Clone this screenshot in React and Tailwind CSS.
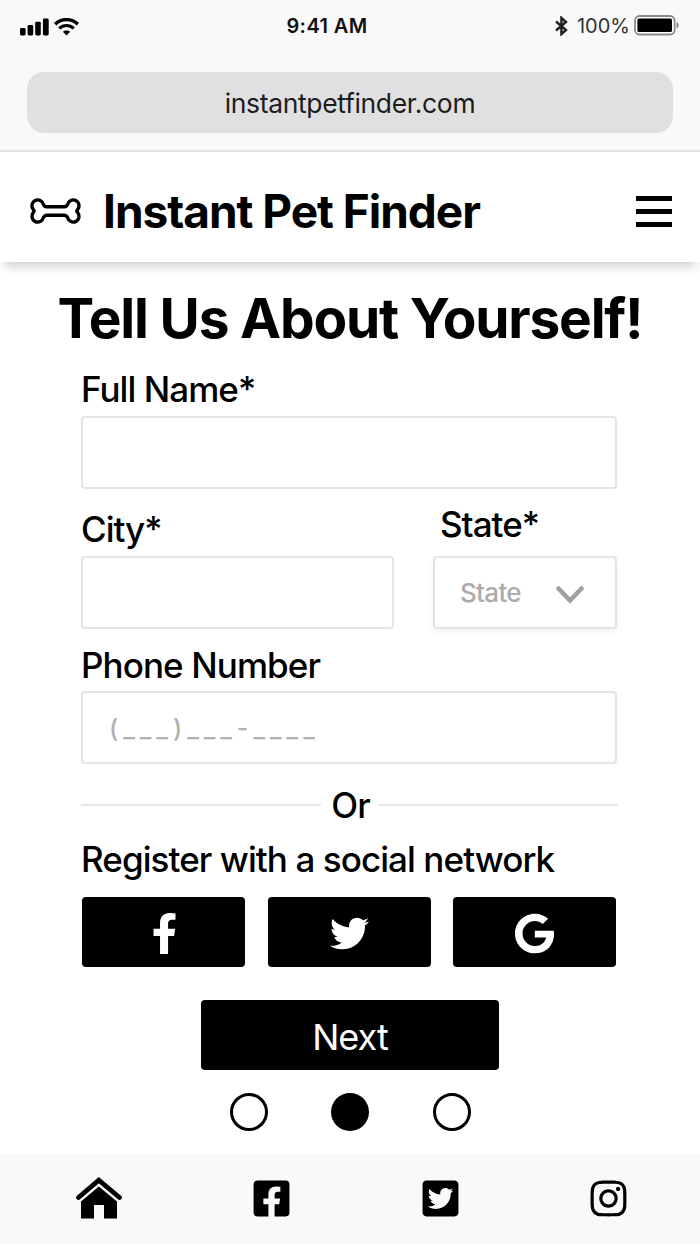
import { FaFacebookF, FaTwitter, FaGoogle, FaInstagram, FaFacebookSquare, FaTwitterSquare } from 'react-icons/fa';

function StatusBar() {
  return (
    <div className="grid h-[53px] grid-cols-3 items-center pr-[20px] pl-[20px] text-[20px] leading-[53px] text-[#111]">
      <div className="flex items-center gap-[5px]">
        <svg className="mt-px h-[18px] w-[29px]" viewBox="0 0 29 18" fill="black">
          <rect x="0" y="10" width="5.6" height="7.5" rx="1.4" />
          <rect x="7.6" y="7" width="5.6" height="10.5" rx="1.4" />
          <rect x="15.2" y="3.8" width="5.6" height="13.7" rx="1.4" />
          <rect x="22.9" y="0.5" width="5.8" height="17" rx="1.4" />
        </svg>
        <svg className="h-[18px] w-[25px]" viewBox="0 0 25 18" fill="none" stroke="black">
          <path d="M1.2 6.2C7.4 0.1 17.6 0.1 23.8 6.2" strokeWidth="3.4" />
          <path d="M5.2 10.4C9.2 6.5 15.8 6.5 19.8 10.4" strokeWidth="3" />
          <path d="M8.9 13.8C10.9 11.9 14.1 11.9 16.1 13.8L12.5 17.4Z" fill="black" stroke="none" />
        </svg>
      </div>
      <div className="pr-[46px] text-center font-semibold tracking-[0.4px] whitespace-nowrap">9:41 AM</div>
      <div className="flex items-center justify-end">
        <svg className="mr-[9px] mb-[2px] h-[20px] w-[13px]" viewBox="0 0 13 20" fill="none" stroke="#222" strokeWidth="2.4">
          <path d="M1 5.5L11 14L6.4 18.2V1.8L11 6L1 14.5" />
        </svg>
        <span className="mr-[4px] text-[#333]">100%</span>
        <svg className="mb-px h-[22px] w-[46px]" viewBox="0 0 46 22">
          <rect x="1" y="1" width="39.6" height="18.5" rx="4.5" fill="#fff" stroke="#8a8a8a" strokeWidth="1.8" />
          <rect x="3.4" y="3.5" width="34.6" height="13.4" rx="1.5" fill="#000" />
          <path d="M42.5 7C45.5 8.200 45.5 12.400 42.5 13.500Z" fill="#8a8a8a" />
        </svg>
      </div>
    </div>
  );
}

function BoneIcon() {
  return (
    <svg className="mt-[8px] h-[28px] w-[54px]" viewBox="0 0 54 28" fill="none" stroke="black" strokeWidth="3.400" strokeLinejoin="round">
      <path d="M17.500 9.800H35.500Q37.600 9.600 38.600 7.500A5.800 5.800 0 1 1 48.600 12.600Q47.200 14 48.600 15.400A5.800 5.800 0 1 1 38.600 20.500Q37.600 18.400 35.500 18.200H17.500Q15.400 18.400 14.400 20.500A5.800 5.800 0 1 1 4.400 15.400Q5.800 14 4.400 12.600A5.800 5.800 0 1 1 14.400 7.500Q15.400 9.600 17.500 9.800Z" />
    </svg>
  );
}

function HomeIcon() {
  return (
    <svg className="h-[42px] w-[46px]" viewBox="0 0 46 42">
      <path d="M2.500 20.500L22.800 3.200L43.500 20.500" fill="none" stroke="black" strokeWidth="4.800" strokeLinecap="round" />
      <path d="M5 24.500L22.800 9.500L41 24.500V41.500H28V28H18V41.500H5Z" fill="black" />
    </svg>
  );
}

const label = 'text-[35px] leading-[44px] font-medium whitespace-nowrap text-black';
const field = 'h-[73px] rounded-[4px] border-2 border-[#e4e4e4] bg-white';
const social = 'flex h-[70px] w-[163px] items-center justify-center rounded-[4px] bg-black pt-[2px]';

export default function App() {
  return (
    <div className="flex h-[1244px] w-[700px] flex-col overflow-hidden bg-white font-['Inter',sans-serif] text-black">
      <div className="h-[152px] shrink-0 border-b-2 border-[#e2e2e2] bg-[#f9f9f9]">
        <StatusBar />
        <div className="mx-[27px] mt-[19px] h-[61px] rounded-[17px] bg-[#e0e0e2] text-center text-[26.5px] leading-[63px] tracking-[-0.35px] text-[#1c1c1c]">
          instantpetfinder.com
        </div>
      </div>

      <header className="flex h-[110px] shrink-0 items-center pr-[28px] pl-[29px] shadow-[0_8px_10px_-4px_rgba(0,0,0,0.2)]">
        <BoneIcon />
        <h1 className="ml-[20px] grow pt-[8px] text-[46px] leading-[54px] font-bold tracking-[-1.02px] whitespace-nowrap">Instant Pet Finder</h1>
        <div className="mt-[9px] flex w-[36px] flex-col gap-[8px]">
          <div className="h-[5px] bg-black" />
          <div className="h-[5px] bg-black" />
          <div className="h-[5px] bg-black" />
        </div>
      </header>

      <h2 className="mt-[26px] shrink-0 text-center text-[55px] leading-[60px] font-bold tracking-[-1.2px] whitespace-nowrap">Tell Us About Yourself!</h2>

      <main className="mx-[81px] mt-[19px] flex shrink-0 flex-col">
        <div className={`${label} tracking-[-0.95px]`}>Full Name*</div>
        <div className={`${field} mt-[5px] w-[536px]`} />
        <div className="mt-[13px] flex w-[536px] justify-between">
          <div className="w-[313px] pt-[5px]">
            <div className={`${label} tracking-[-1px]`}>City*</div>
            <div className={`${field} mt-[5px]`} />
          </div>
          <div className="w-[184px]">
            <div className={`${label} ml-[7px] tracking-[-1px]`}>State*</div>
            <div className={`${field} mt-[10px] flex items-center justify-between pr-[31px] pl-[25px] shadow-[0_3px_6px_rgba(0,0,0,0.05)]`}>
              <span className="text-[26px] font-medium tracking-[-0.7px] text-[#ababab]">State</span>
              <svg className="mt-[5px] h-[18px] w-[28px]" viewBox="0 0 28 18" fill="none" stroke="#a0a0a0" strokeWidth="4.500" strokeLinecap="round">
                <path d="M2.500 2.500L14 14.500L25.500 2.500" />
              </svg>
            </div>
          </div>
        </div>
        <div className={`${label} mt-[14px] tracking-[-0.9px]`}>Phone Number</div>
        <div className={`${field} mt-[4px] w-[536px] pl-[26px] text-[25px] leading-[71px] font-medium tracking-[5px] whitespace-nowrap text-[#b0b0b0]`}>(___)___-____</div>
        <div className="mt-[19px] flex w-[537px] items-center">
          <div className="h-[2px] w-[240px] bg-[#e6e6e6]" />
          <div className={`${label} w-[57px] pl-[2px] text-center tracking-[-1px]`}>Or</div>
          <div className="h-[2px] w-[240px] bg-[#e6e6e6]" />
        </div>
        <div className={`${label} mt-[10px] tracking-[-0.92px]`}>Register with a social network</div>
        <div className="mt-[16px] ml-px flex w-[534px] justify-between text-white">
          <button className={social}><FaFacebookF size={41} className="ml-[2px]" /></button>
          <button className={social}><FaTwitter size={39} /></button>
          <button className={social}><FaGoogle size={41} /></button>
        </div>
        <button className="mx-auto mt-[33px] h-[70px] w-[298px] rounded-[4px] bg-black text-[36px] leading-[74px] tracking-[-0.95px] text-white">Next</button>
        <div className="mx-auto mt-[23px] flex w-[241px] justify-between">
          <span className="h-[38px] w-[38px] rounded-full border-[3px] border-black" />
          <span className="h-[38px] w-[38px] rounded-full bg-black" />
          <span className="h-[38px] w-[38px] rounded-full border-[3px] border-black" />
        </div>
      </main>

      <footer className="mt-auto flex h-[90px] shrink-0 items-center bg-[#f9f9f9] pb-[2px] pl-[76px]">
        <HomeIcon />
        <FaFacebookSquare size={41} className="ml-[129px]" />
        <FaTwitterSquare size={41} className="ml-[128px]" />
        <FaInstagram size={41} className="ml-[126.5px]" />
      </footer>
    </div>
  );
}
